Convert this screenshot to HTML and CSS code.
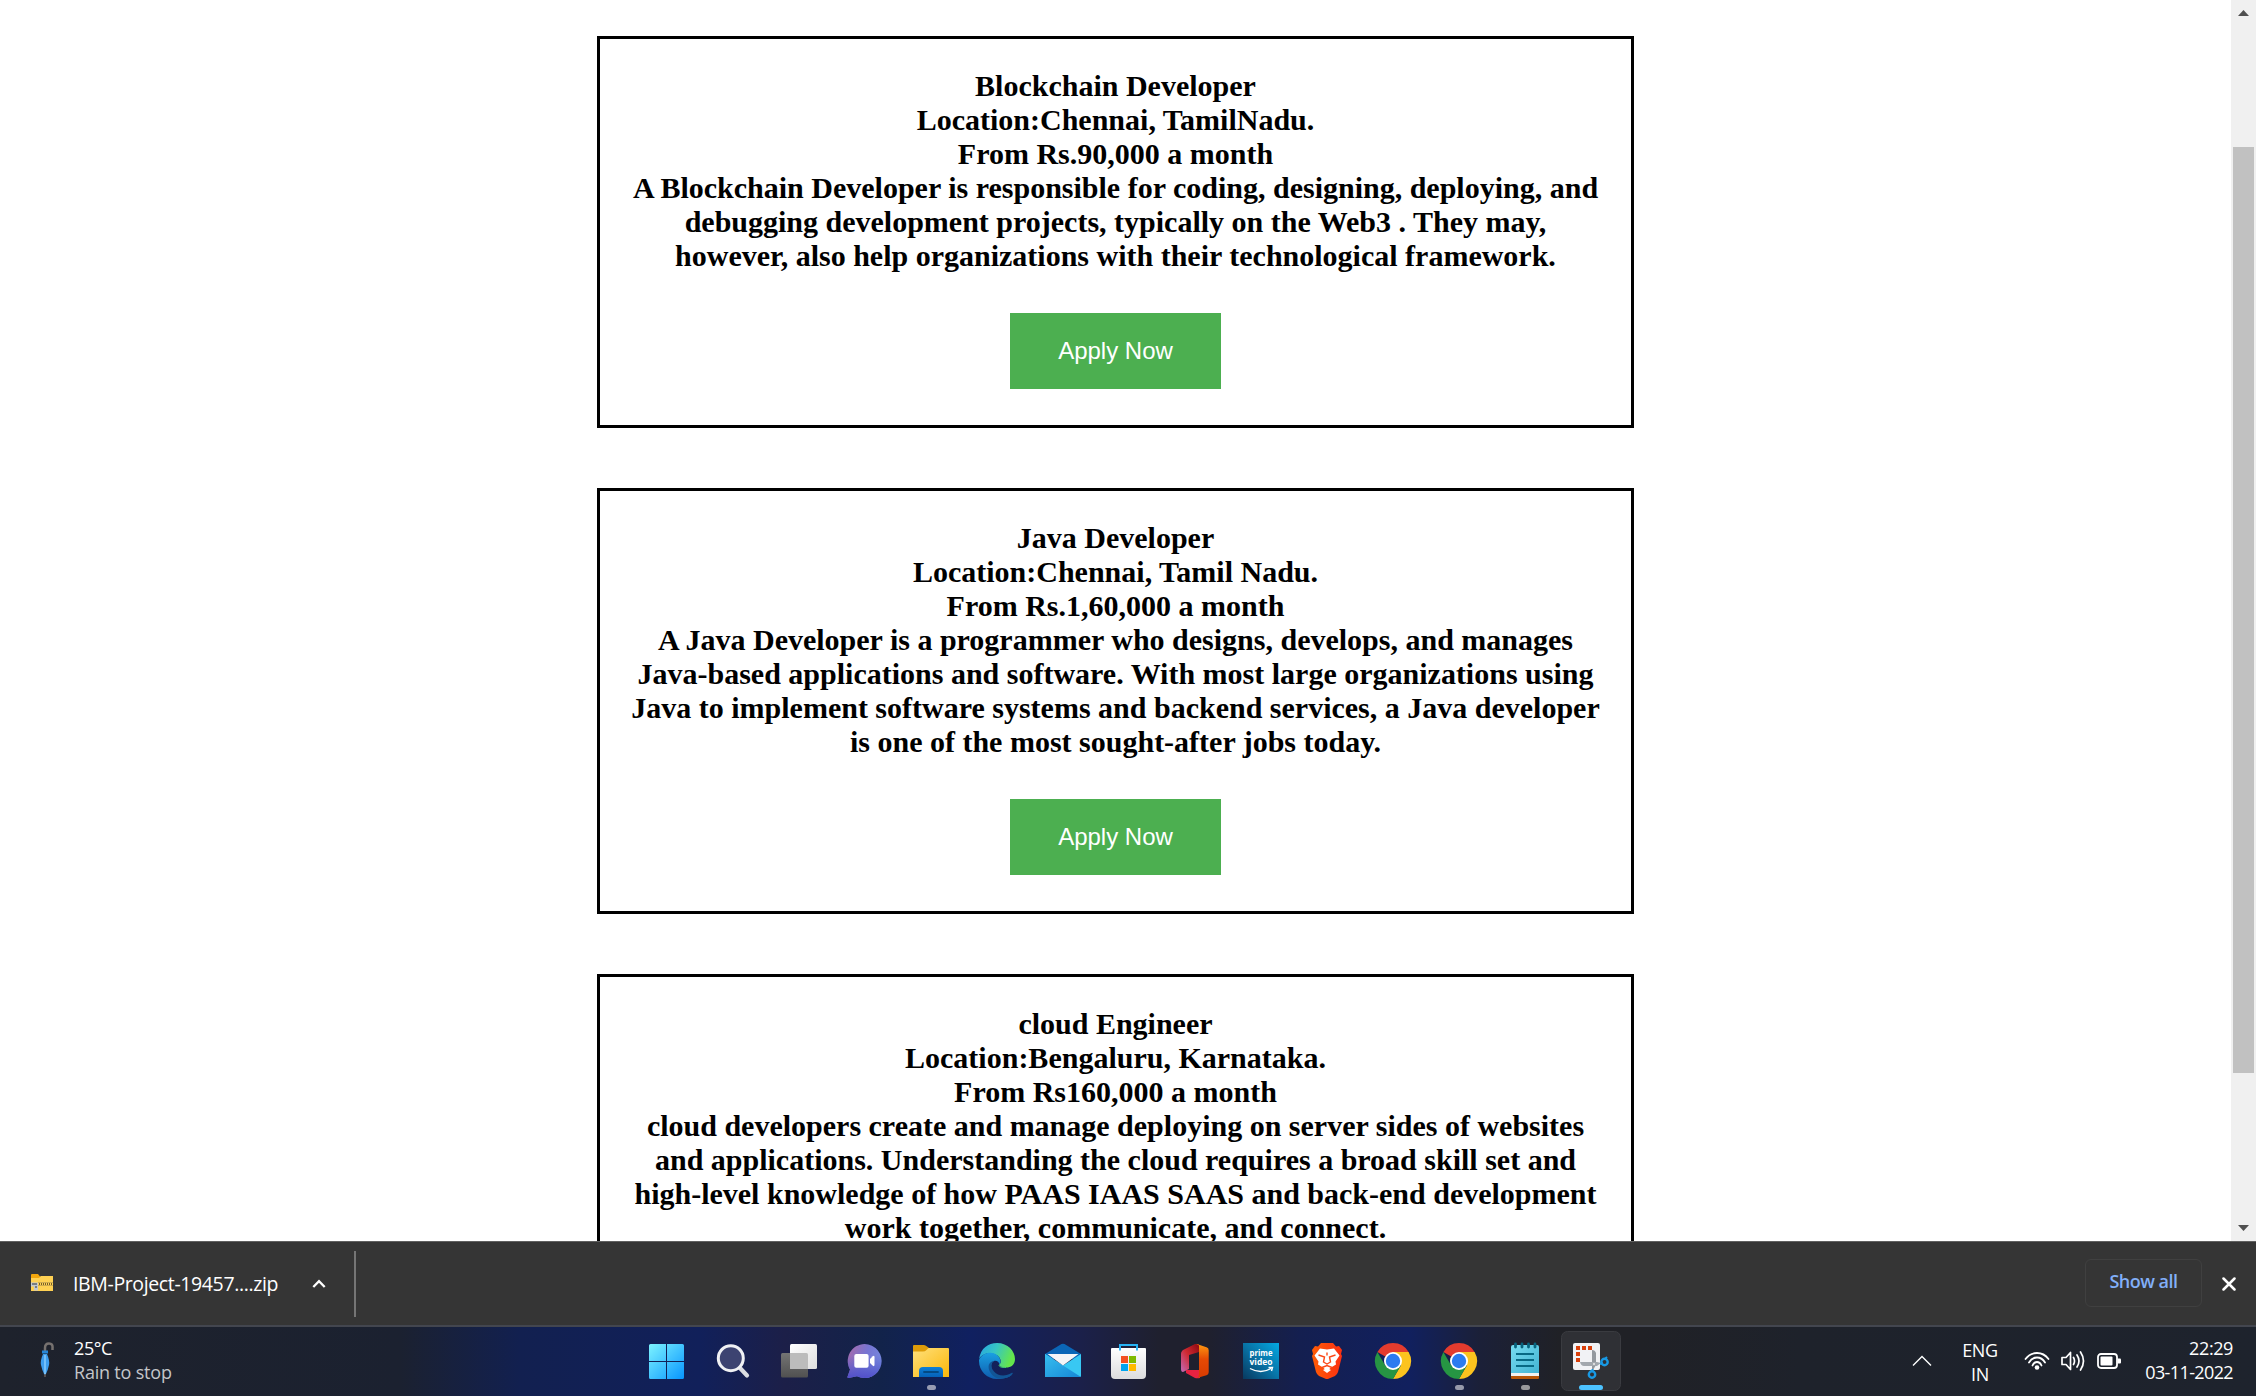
FILE: index.html
```html
<!DOCTYPE html>
<html lang="en">
<head>
<meta charset="utf-8">
<title>Jobs</title>
<link rel="stylesheet" href="styles.css">
</head>
<body>
<div class="viewport">
  <main class="jobs">
    <section class="card">
      <p class="text">Blockchain Developer<br>Location:Chennai, TamilNadu.<br>From Rs.90,000 a month<br>A Blockchain Developer is responsible for coding, designing, deploying, and<br>debugging development projects, typically on the Web3 . They may,<br>however, also help organizations with their technological framework.</p>
      <button class="apply">Apply Now</button>
    </section>
    <section class="card">
      <p class="text">Java Developer<br>Location:Chennai, Tamil Nadu.<br>From Rs.1,60,000 a month<br>A Java Developer is a programmer who designs, develops, and manages<br>Java-based applications and software. With most large organizations using<br>Java to implement software systems and backend services, a Java developer<br>is one of the most sought-after jobs today.</p>
      <button class="apply">Apply Now</button>
    </section>
    <section class="card">
      <p class="text">cloud Engineer<br>Location:Bengaluru, Karnataka.<br>From Rs160,000 a month<br>cloud developers create and manage deploying on server sides of websites<br>and applications. Understanding the cloud requires a broad skill set and<br>high-level knowledge of how PAAS IAAS SAAS and back-end development<br>work together, communicate, and connect.</p>
    </section>
  </main>
  <div class="scrollbar">
    <svg width="25" height="25" viewBox="0 0 25 25"><path d="M7 16 12.500 10 18 16Z" fill="#505050"/></svg>
    <div class="thumb"></div>
    <svg width="25" height="25" viewBox="0 0 25 25"><path d="M7 9 12.500 15 18 9Z" fill="#505050"/></svg>
  </div>
</div>

<div class="downloads">
  <svg class="zip" width="24" height="20" viewBox="0 0 24 20">
    <path d="M1 2q0-1 1-1h6l2 2.500h13v4H1Z" fill="#f2a60d"/>
    <path d="M1 5h8l2-2h12v15H1Z" fill="#ffd153"/>
    <path d="M9 11h14" stroke="#775e28" stroke-width="2" stroke-dasharray="1 1"/>
    <path d="M8 9.500h15M8 12.500h15" stroke="#b79a4d" stroke-width=".7"/>
    <path d="M1 9.500h7v8H4v-4H1Z" fill="#c5c9ce"/><path d="M2 11h5M5 14h2" stroke="#5f646b" stroke-width="1.500"/>
  </svg>
  <span class="filename">IBM-Project-19457....zip</span>
  <svg class="caret" width="14" height="10" viewBox="0 0 14 10"><path d="M1.300 8 7 2.200 12.700 8" fill="none" stroke="#fff" stroke-width="2.300"/></svg>
  <span class="divider"></span>
  <button class="showall">Show all</button>
  <svg class="close" width="14" height="14" viewBox="0 0 14 14"><path d="M1.500 1.500l11 11M12.500 1.500l-11 11" stroke="#fff" stroke-width="2.500" stroke-linecap="round"/></svg>
</div>

<footer class="taskbar">
  <div class="weather">
    <svg width="14" height="36" viewBox="0 0 14 36">
      <path d="M5 9V6q0-4.500 4-4.500T12.500 6v2" fill="none" stroke="#76716f" stroke-width="2.500"/>
      <path d="M2 8.500h6v3H2Z" fill="#2686d8"/><path d="M3 12h4q3 7 2 11-1 5-3.500 10h-1Q2 28 1 23q-1-4 2-11Z" fill="#3d9dee"/>
      <path d="M5 13v19" stroke="#79c4fb" stroke-width="1.800"/><path d="M5 32v3" stroke="#675c57" stroke-width="1.500"/>
    </svg>
    <div class="lines"><span class="temp">25°C</span><span class="cond">Rain to stop</span></div>
  </div>

  <div class="apps">
    <svg viewBox="0 0 66 69"><defs><linearGradient id="win" x1="0" y1="0" x2="1" y2="1" ><stop stop-color="#7df3ff"/><stop offset="1" stop-color="#0795ff"/></linearGradient></defs>
      <path fill="url(#win)" d="M17.500 17H33v17H16V18.500q0-1.500 1.500-1.500ZM34 17h15.500q1.500 0 1.500 1.500V34H34ZM16 35h17v17H17.500Q16 52 16 50.500ZM34 35h17v15.500q0 1.500-1.500 1.500H34Z"/></svg>

    <svg viewBox="0 0 66 69"><path d="M41 41l7 7.500" stroke="#dcdde2" stroke-width="4.200" stroke-linecap="round"/><circle cx="31.800" cy="31.200" r="12.500" fill="#3d4371" stroke="#f0f1f4" stroke-width="3"/></svg>

    <svg viewBox="0 0 66 69"><defs><linearGradient id="tv" x1="0" y1="0" x2="1" y2="1"><stop stop-color="#fff"/><stop offset="1" stop-color="#dedede"/></linearGradient><linearGradient id="tb" x1="0" y1="0" x2="0" y2="1"><stop stop-color="#747474"/><stop offset="1" stop-color="#505050"/></linearGradient></defs>
      <rect x="16" y="26" width="27" height="24.500" rx="1.500" fill="url(#tb)"/><rect x="25" y="17" width="27" height="25" rx="1.500" fill="url(#tv)"/><path d="M25 26h16.500q1.500 0 1.500 1.500V42H26.500Q25 42 25 40.500Z" fill="#bcbcbc"/></svg>

    <svg viewBox="0 0 66 69"><defs><linearGradient id="chat" x1="0" y1=".2" x2="1" y2=".6"><stop stop-color="#a66bab"/><stop offset=".5" stop-color="#7775d2"/><stop offset="1" stop-color="#7489df"/></linearGradient><linearGradient id="chat2" x1="0" y1="0" x2="0" y2="1"><stop offset=".35" stop-color="#5059c9" stop-opacity="0"/><stop offset="1" stop-color="#514fca"/></linearGradient></defs>
      <path d="M33.500 17a17 17 0 1 1-7.500 32.200L17.500 51q-1.300 0-1-1.200L19 42.500A17 17 0 0 1 33.500 17Z" fill="url(#chat)"/><path d="M33.500 17a17 17 0 1 1-7.500 32.200L17.500 51q-1.300 0-1-1.200L19 42.500A17 17 0 0 1 33.500 17Z" fill="url(#chat2)"/>
      <rect x="23.300" y="27" width="14.300" height="13.800" rx="2" fill="#fff"/><path d="M39 32l2.800-2.800q1.700-1 1.700 1v7.600q0 2-1.700 1L39 36Z" fill="#fff"/></svg>

    <svg viewBox="0 0 66 69"><defs><linearGradient id="fold" x1="0" y1="0" x2="1" y2="1"><stop stop-color="#ffe07c"/><stop offset="1" stop-color="#fab709"/></linearGradient><linearGradient id="fb" x1="0" y1="0" x2="0" y2="1"><stop stop-color="#0e80d6"/><stop offset="1" stop-color="#0561b8"/></linearGradient></defs>
      <path d="M17 18h10q1.500 0 3 1.500l2 1.500v6H16v-8q0-1 1-1Z" fill="#dd9b08"/><path d="M16 24.500h10q2 0 3.500-1.500l2-2H51q1 0 1 1v28H16Z" fill="url(#fold)"/><path d="M22 50v-6q0-4 4-4h16q4 0 4 4v6Z" fill="url(#fb)"/><path d="M27 45h14" stroke="#034a85" stroke-width="1.800" stroke-linecap="round"/><rect x="30" y="58" width="9" height="5" rx="2.500" fill="#979cb2"/></svg>

    <svg viewBox="0 0 66 69"><defs><linearGradient id="e1" x1="0" y1="0" x2="1" y2=".3"><stop stop-color="#24a4e5"/><stop offset=".5" stop-color="#37c5c3"/><stop offset="1" stop-color="#64e64c"/></linearGradient><linearGradient id="e2" x1="0" y1="0" x2="0" y2="1"><stop stop-color="#1aa0e2"/><stop offset="1" stop-color="#0f5cae"/></linearGradient></defs>
      <path d="M16 32C18 21 25 16 34 16c11 0 18 8 18 16 0 6-4 8.500-9 8.500-4 0-7-1.200-6.500-3 2-2 1.500-5-.5-7.500C31 24.500 20 25 16 32Z" fill="url(#e1)"/>
      <path d="M16 33c3-8 15-10 20-3 2 3 2 5.500.5 7.500-.4-2.500-3-4.500-5.500-3.500-5 2-3 12 4 15.500 4.500 2 9.500 1 14-2C45.500 51 40 52 34 52c-10 0-18-8-18-18Z" fill="url(#e2)"/>
      <path d="M31 34c-3 1.500-4 6 0 10.500 4 5 12 5 17.500 1.500 1-.5 1.500.2 1 1C46 51 40 52 35 51.500 25 48 22 35 31 34Z" fill="#125596"/>
      <path d="M36.500 37.500c-1.200 1.800.5 3 6.500 3" fill="none" stroke="#42cc78"/></svg>

    <svg viewBox="0 0 66 69"><defs><linearGradient id="ml" x1="0" y1="0" x2="1" y2="1"><stop stop-color="#37bff0"/><stop offset="1" stop-color="#1687d6"/></linearGradient></defs>
      <path d="M16 27 32.500 17q1.500-.7 3 0L52 27v5H16Z" fill="#0b66b7"/><path d="M16 27l18 11.500L52 27v22q0 1-1 1H17q-1 0-1-1Z" fill="#38c8f3"/><path d="M16 27l36 23H17q-1 0-1-1Z" fill="url(#ml)"/><path d="M18.500 27h31L34 38.500Z" fill="#f5f5f7"/></svg>

    <svg viewBox="0 0 66 69"><defs><linearGradient id="st" x1="0" y1="0" x2="0" y2="1"><stop stop-color="#fff"/><stop offset="1" stop-color="#dcdcde"/></linearGradient></defs>
      <path d="M16 22q0-1 1-1h33q1 0 1 1v26q0 4-4 4H20q-4 0-4-4Z" fill="url(#st)"/><path d="M25 23.500V18h17v5.500" fill="none" stroke="#28b3f4" stroke-width="2"/><path d="M26 29h7v7h-7Z" fill="#f35022"/><path d="M34 29h7v7h-7Z" fill="#7fba00"/><path d="M26 37h7v7h-7Z" fill="#00a4ef"/><path d="M34 37h7v7h-7Z" fill="#ffb900"/></svg>

    <svg viewBox="0 0 66 69"><defs><linearGradient id="o1" x1="0" y1="0" x2="0" y2="1"><stop stop-color="#ff9b12"/><stop offset=".45" stop-color="#e64a04"/><stop offset="1" stop-color="#d83b01"/></linearGradient><linearGradient id="o2" x1="1" y1="0" x2="0" y2="1"><stop stop-color="#8c0810"/><stop offset=".5" stop-color="#d02a32"/><stop offset="1" stop-color="#c46ab8"/></linearGradient></defs>
      <path d="M38 17v8l-10 3v14l-6 3q-2 0-2-3V27q0-3 3-4.500L34 17Z" fill="url(#o2)"/><path d="M25 43h14v8q-3 .7-5 0l-9-5Z" fill="#e72241"/><path d="M35 16.700l10.500 3.500q2.200.7 2.200 3v22q0 2.300-2.200 3L36 51q2-1 2-4V18.500Z" fill="url(#o1)"/></svg>

    <svg viewBox="0 0 66 69"><defs><linearGradient id="pv" x1="1" y1="0" x2="0" y2="1"><stop stop-color="#03a8e2"/><stop offset=".5" stop-color="#0873a6"/><stop offset="1" stop-color="#08395f"/></linearGradient></defs>
      <rect x="16" y="16" width="36" height="36" fill="url(#pv)"/><text class="prime" x="34" y="29.300" textLength="23" lengthAdjust="spacingAndGlyphs">prime</text><text class="prime" x="34" y="38.200" textLength="23" lengthAdjust="spacingAndGlyphs">video</text><path d="M23 41.500q11 6 21 0M41.500 40.500h4l-1 3.500" fill="none" stroke="#fff" stroke-width="1.400"/></svg>

    <svg viewBox="0 0 66 69"><defs><linearGradient id="br" x1="0" x2="1"><stop stop-color="#ff5c05"/><stop offset="1" stop-color="#fb3012"/></linearGradient></defs>
      <path d="M28 16h12l3 3.500 3-.5 3 4-1 4 1 2-4 16q-.8 2.500-3 4l-6 2.500q-2 1-4 0l-6-2.500q-2.200-1.500-3-4L19 29l1-2-1-4 3-4 3 .5Z" fill="url(#br)"/>
      <path d="M27 21.500l7 1 7-1 5.500 7-4 6 .5 3-5 3-4 3.500-4-3.500-5-3 .5-3-4-6Z" fill="#fff"/><path d="M34 25.500v3M25.500 28l6 2-1 5 3.500 2 3.500-2-1-5 6-2M29 40.500l5-2 5 2" fill="none" stroke="#fb4817" stroke-width="1.400"/><path d="M30 43l4-2 4 2-4 3Z" fill="#fff"/></svg>

    <svg viewBox="0 0 66 69"><g id="chrome"><path d="M34 34 18.400 25A18 18 0 0 1 49.600 25Z" fill="#e33b2e"/><path d="M34 25h15.600A18 18 0 0 1 34 52l7.800-13.500Z" fill="#fcc31e"/><path d="M26.200 38.500 18.400 25A18 18 0 0 0 34 52l7.800-13.500Z" fill="#269543"/><circle cx="34" cy="34" r="9" fill="#fff"/><circle cx="34" cy="34" r="7.200" fill="#2b7bf0"/></g></svg>

    <svg viewBox="0 0 66 69"><use href="#chrome"/><rect x="30" y="58" width="9" height="5" rx="2.500" fill="#979aaa"/></svg>

    <svg viewBox="0 0 66 69"><defs><linearGradient id="np" x1="0" y1="0" x2="1" y2="1"><stop stop-color="#78dcf0"/><stop offset="1" stop-color="#42b3d2"/></linearGradient></defs>
      <path d="M20 45h28v6q0 1-1 1H21q-1 0-1-1Z" fill="#b85709"/><path d="M20 44h28v5H20Z" fill="#f3f1ef"/><path d="M20 20q0-2 2-2h24q2 0 2 2v26H20Z" fill="url(#np)"/><path d="M25 27h18M25 33h18M25 39h18" stroke="#086984" stroke-width="1.900"/><path d="M24.500 17v3M31 17v3M37.500 17v3M44 17v3" stroke="#08647e" stroke-width="2.800" stroke-linecap="round"/><rect x="30" y="58" width="9" height="5" rx="2.500" fill="#99999c"/></svg>

    <svg viewBox="0 0 66 69"><rect x="4.500" y="4.500" width="59" height="59" rx="6" fill="#2f3035" stroke="#3a3b40"/><rect x="16" y="16" width="27" height="27" rx="2" fill="#f1f2f5"/><path d="M19 19h4v4h-4ZM25 19h4v4h-4ZM31 19h4v4h-4ZM19 25h4v4h-4ZM19 31h4v4h-4Z" fill="#d8400c"/><path d="M35 23q3 0 4 3v12l-3 5h-1Z" fill="#94999f"/><path d="M23 35q1 4 4 4h13l4-3-4-1Z" fill="#a2a7ad"/><circle cx="37" cy="37" r="1" fill="#eee"/><circle cx="47.500" cy="35" r="3.200" fill="none" stroke="#1899e4" stroke-width="2.400"/><circle cx="35" cy="47.500" r="3.200" fill="none" stroke="#1899e4" stroke-width="2.400"/><path d="M43 37l3-1M35.500 44V42M48 32l2-2" stroke="#1899e4" stroke-width="2"/><rect x="22" y="58" width="24" height="5" rx="2.500" fill="#4cc2ff"/></svg>
  </div>

  <div class="tray">
    <svg class="up" width="20" height="12" viewBox="0 0 20 12"><path d="M1 10.500 10 1.500 19 10.500" fill="none" stroke="#fff" stroke-width="1.400"/></svg>
    <div class="lang"><span>ENG</span><span>IN</span></div>
    <svg class="wifi" width="26" height="20" viewBox="0 0 26 20"><g fill="none" stroke="#fff" stroke-width="1.800" stroke-linecap="round"><path d="M1.500 8Q6 2 13 2t11.500 6M5 11.500q3-5 8-5t8 5M8.500 14.500q1.500-3.500 4.500-3.500t4.500 3.500"/></g><circle cx="13" cy="16.500" r="2.300" fill="#fff"/></svg>
    <svg class="vol" width="26" height="22" viewBox="0 0 26 22"><g fill="none" stroke="#fff" stroke-width="1.700" stroke-linecap="round" stroke-linejoin="round"><path d="M2 7.500h4l4.500-5v17l-4.500-5H2Z"/><path d="M13.500 7.500q2 3.500 0 7M17 5q4 6 0 12M20.500 2q6 9 0 18"/></g></svg>
    <svg class="bat" width="26" height="18" viewBox="0 0 26 18"><rect x="2" y="2" width="19" height="14" rx="3" fill="none" stroke="#fff" stroke-width="1.800"/><rect x="4.500" y="4.500" width="12" height="9" rx="1" fill="#fff"/><path d="M21.500 6.500H24q1 0 1 1v3q0 1-1 1h-2.500Z" fill="#fff"/></svg>
    <div class="clock"><span class="time">22:29</span><span class="date">03-11-2022</span></div>
  </div>
</footer>
</body>
</html>
```
FILE: styles.css
```css
* { box-sizing: border-box; }
body {
  margin: 0;
  width: 2256px;
  height: 1396px;
  overflow: hidden;
  display: flex;
  flex-direction: column;
  background: #fff;
}
button { border: 0; padding: 0; margin: 0; }
svg { display: block; flex: none; }

/* Page */
.viewport { flex: none; height: 1241px; display: flex; overflow: hidden; }
.jobs {
  flex: 1;
  display: flex;
  flex-direction: column;
  align-items: center;
  gap: 60px;
  padding-top: 36px;
}
.card {
  flex: none;
  width: 1037px;
  border: 3px solid #000;
  padding: 30px 0 36px;
  display: flex;
  flex-direction: column;
  align-items: center;
  gap: 40px;
}
.text {
  margin: 0;
  text-align: center;
  white-space: nowrap;
  font: bold 30px/34px "Liberation Serif", "Times New Roman", serif;
  color: #000;
}
.apply {
  width: 211px;
  height: 76px;
  background: #4caf50;
  color: #fff;
  font: 24px/28px "Liberation Sans", Arial, sans-serif;
}
.scrollbar {
  width: 25px;
  background: #f0f0f0;
  display: flex;
  flex-direction: column;
  align-items: center;
  justify-content: space-between;
}
.thumb { width: 21px; height: 926px; margin: 122px 0 auto; background: #c1c1c1; }

/* Download shelf */
.downloads {
  flex: none;
  height: 84px;
  border-top: 1px solid #606060;
  background: #353535;
  display: flex;
  align-items: center;
  font-family: "Open Sans", "Noto Sans", sans-serif;
}
.zip { margin: 0 0 2px 30px; }
.filename {
  margin-left: 19px;
  width: 219px;
  font-size: 19.5px;
  line-height: 26px;
  letter-spacing: -0.37px;
  color: #fff;
  white-space: nowrap;
}
.caret { margin-left: 20px; }
.divider { margin-left: 28px; width: 2px; height: 66px; background: #757575; }
.showall {
  margin: 0 0 2px auto;
  padding-bottom: 3px;
  width: 117px;
  height: 48px;
  border: 1px solid #404040;
  border-radius: 6px;
  background: none;
  color: #82aff8;
  font: 600 18px/26px "Open Sans", "Noto Sans", sans-serif;
  letter-spacing: -0.5px;
}
.close { margin: 0 20px; }

/* Taskbar */
.taskbar {
  flex: none;
  height: 71px;
  border-top: 2px solid #43464f;
  display: flex;
  font: 18px/24px "Open Sans", "Noto Sans", sans-serif;
  color: #fff;
  background: linear-gradient(90deg, #1e222c 0, #1b2130 400px, #122050 520px, #11205a 700px, #1c1f48 785px, #12234a 880px, #102060 970px, #1b204a 1080px, #1f202e 1160px, #1f202e 1210px, #141f50 1300px, #11205e 1410px, #1b2038 1480px, #202126 1560px, #202126 1640px, #1e222b 1800px, #1e232d 2256px);
}
.weather { width: 633px; display: flex; padding: 9px 0 0 40px; gap: 20px; }
.weather svg { margin-top: 6px; }
.lines, .lang, .clock { display: flex; flex-direction: column; white-space: nowrap; }
.temp { letter-spacing: -0.4px; }
.cond { color: #c4c6c9; letter-spacing: -0.2px; }
.apps { display: flex; }
.apps svg { width: 66px; height: 69px; }
.prime { font: bold 9.500px "Open Sans", sans-serif; fill: #fff; text-anchor: middle; }
.tray { margin-left: auto; padding-right: 23px; display: flex; align-items: center; }
.up { margin: 0 21px 2px 0; }
.lang { width: 54px; align-items: center; margin: 0 17px 0 0; letter-spacing: -0.3px; }
.wifi { margin: 0 10px 2px 0; }
.vol { margin: 0 10px 2px 0; }
.bat { margin: 0 22px 2px 0; }
.clock { align-items: flex-end; width: 89px; margin-bottom: 3px; }
.time { letter-spacing: -0.4px; }
.date { letter-spacing: -0.62px; }
```
